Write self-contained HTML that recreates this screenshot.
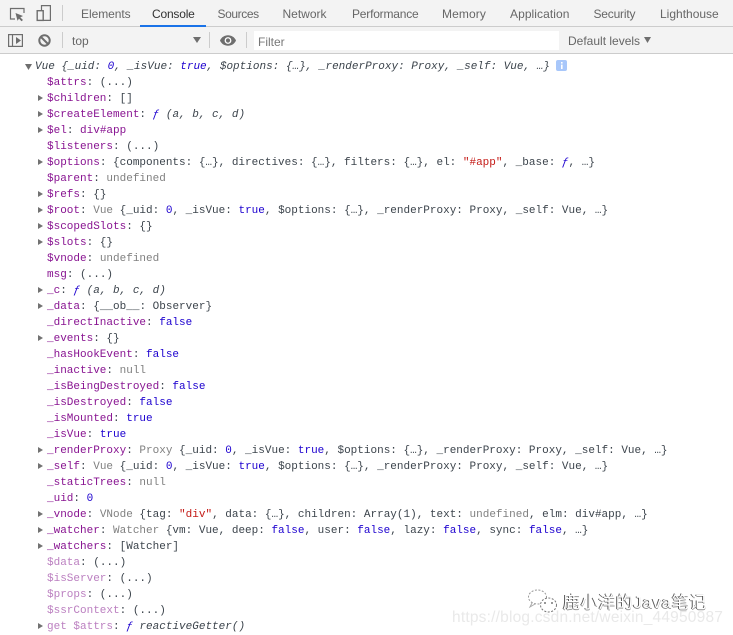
<!DOCTYPE html>
<html><head><meta charset="utf-8">
<style>
html,body{margin:0;padding:0;background:#fff}
body{width:733px;height:635px;overflow:hidden;position:relative;font-family:"Liberation Sans",sans-serif}
.bar1{position:absolute;left:0;top:0;width:733px;height:26px;background:#f3f3f3;border-bottom:1px solid #ccc}
.bar2{position:absolute;left:0;top:27px;width:733px;height:26px;background:#f3f3f3;border-bottom:1px solid #ccc}
.t{position:absolute;z-index:2;top:6px;font-size:12px;line-height:16px;color:#666;white-space:nowrap}
.sep{position:absolute;width:1px;height:16px;background:#ccc}
.ul{position:absolute;left:140px;top:25px;width:66px;height:2px;background:#1a73e8}
.r{position:absolute;left:47px;margin-top:1px;height:16px;line-height:16px;font-family:"Liberation Mono",monospace;font-size:11px;color:#3c444c;white-space:pre}
.k{color:#881391}.d{color:#bb7fc0}.n{color:#1c00cf}.s{color:#c41a16}.g{color:#808080}.i{font-style:italic}
.a{position:absolute;width:0;height:0;margin-top:1px;border-top:3.5px solid transparent;border-bottom:3.5px solid transparent;border-left:5px solid #727272}
svg{position:absolute;left:0;top:0}
.wm{position:absolute;z-index:3;left:452px;top:608px;margin-top:1px;font-size:15.5px;line-height:18px;color:#e9e9e9;white-space:nowrap;letter-spacing:.2px}
.wx{position:absolute;z-index:4;left:563px;top:592px;font-size:17px;letter-spacing:.6px;line-height:22px;color:#fff;white-space:nowrap;text-shadow:-1px 0 0 #555,0 1px 0 #999;font-family:"Liberation Sans","Noto Sans CJK SC",sans-serif}
</style></head><body>
<div class="bar1"></div><div class="bar2"></div>
<div class="sep" style="left:62px;top:5px"></div>
<div class="sep" style="left:62px;top:32px"></div>
<div class="sep" style="left:209px;top:32px"></div>
<div class="sep" style="left:246px;top:32px"></div>
<span class="t" style="left:81px;letter-spacing:-.05px">Elements</span>
<span class="t" style="left:152px;color:#333;letter-spacing:-.2px">Console</span>
<span class="t" style="left:217.5px;letter-spacing:-.4px">Sources</span>
<span class="t" style="left:282.5px">Network</span>
<span class="t" style="left:352px;letter-spacing:-.2px">Performance</span>
<span class="t" style="left:442px;letter-spacing:.1px">Memory</span>
<span class="t" style="left:510px;letter-spacing:.07px">Application</span>
<span class="t" style="left:593.5px;letter-spacing:-.2px">Security</span>
<span class="t" style="left:660px">Lighthouse</span>
<div class="ul"></div>
<span class="t" style="left:72px;top:33px">top</span>
<span class="t" style="left:258px;top:34px;color:#777">Filter</span>
<span class="t" style="left:568px;top:33px">Default levels</span>
<svg width="733" height="635" fill="none">
<rect x="254" y="31" width="305" height="19" fill="#fff"/>
<path d="M24 13V8.5H10.5V19H15" stroke="#6e6e6e" stroke-width="1.2"/>
<path d="M15.5 13L23 16L20.3 17.4L23 20L21.5 21.2L19 18.6L17.5 20.8Z" fill="#6e6e6e"/>
<path d="M41.5 10V5.6H50.4V20.4H43" stroke="#6e6e6e" stroke-width="1.2"/>
<rect x="37.2" y="10.7" width="6" height="9.7" stroke="#6e6e6e" stroke-width="1.4"/>
<rect x="8.6" y="34.6" width="13.8" height="11.8" stroke="#6e6e6e" stroke-width="1.2"/>
<path d="M12.5 35V46" stroke="#6e6e6e" stroke-width="1.2"/>
<path d="M16 37L21 40.5L16 44Z" fill="#6e6e6e"/>
<circle cx="44.5" cy="40.5" r="5.2" stroke="#6e6e6e" stroke-width="2"/>
<path d="M41 37L48 44" stroke="#6e6e6e" stroke-width="2"/>
<path d="M193 37H201L197 43Z" fill="#6e6e6e"/>
<path d="M220 40.5C223 33.5 233 33.5 236 40.5C233 47.5 223 47.5 220 40.5Z" fill="#6e6e6e"/>
<circle cx="228" cy="40.5" r="3.4" fill="#fff"/><circle cx="228" cy="40.5" r="2.1" fill="#6e6e6e"/>
<path d="M644 37H651L647.5 43Z" fill="#6e6e6e"/>
<rect x="556" y="60" width="11" height="11" rx="2" fill="#a8c7fa"/>
<rect x="561" y="62" width="1.6" height="1.6" fill="#fff"/><rect x="561" y="64.6" width="1.6" height="4.4" fill="#fff"/>
<path d="M25 64H32L28.5 70Z" fill="#6e6e6e"/>
<ellipse cx="537.5" cy="597" rx="9" ry="7" stroke="#999" stroke-width="1" stroke-dasharray="2 1.5"/>
<path d="M532 603L530 607L535 604" stroke="#aaa" stroke-width="1"/>
<ellipse cx="548.5" cy="605" rx="8" ry="7" fill="#fff" stroke="#777" stroke-width="1" stroke-dasharray="2 1.5"/>
<circle cx="545" cy="603" r="1" fill="#777"/><circle cx="552" cy="603" r="1" fill="#777"/>
</svg>
<div class="r i" style="left:35px;top:58px">Vue {_uid: <span class="n">0</span>, _isVue: <span class="n">true</span>, $options: {…}, _renderProxy: Proxy, _self: Vue, …}</div>
<div class="r" style="top:74px"><span class="k">$attrs</span>: (...)</div>
<div class="r" style="top:90px"><span class="k">$children</span>: []</div>
<div class="r" style="top:106px"><span class="k">$createElement</span>: <span class="n i">ƒ</span> <span class="i">(a, b, c, d)</span></div>
<div class="r" style="top:122px"><span class="k">$el</span>: <span style="color:#881391">div#app</span></div>
<div class="r" style="top:138px"><span class="k">$listeners</span>: (...)</div>
<div class="r" style="top:154px"><span class="k">$options</span>: {components: {…}, directives: {…}, filters: {…}, el: <span class="s">"#app"</span>, _base: <span class="n i">ƒ</span>, …}</div>
<div class="r" style="top:170px"><span class="k">$parent</span>: <span class="g">undefined</span></div>
<div class="r" style="top:186px"><span class="k">$refs</span>: {}</div>
<div class="r" style="top:202px"><span class="k">$root</span>: <span class="g">Vue</span> {_uid: <span class="n">0</span>, _isVue: <span class="n">true</span>, $options: {…}, _renderProxy: Proxy, _self: Vue, …}</div>
<div class="r" style="top:218px"><span class="k">$scopedSlots</span>: {}</div>
<div class="r" style="top:234px"><span class="k">$slots</span>: {}</div>
<div class="r" style="top:250px"><span class="k">$vnode</span>: <span class="g">undefined</span></div>
<div class="r" style="top:266px"><span class="k">msg</span>: (...)</div>
<div class="r" style="top:282px"><span class="k">_c</span>: <span class="n i">ƒ</span> <span class="i">(a, b, c, d)</span></div>
<div class="r" style="top:298px"><span class="k">_data</span>: {<span>__ob__</span>: Observer}</div>
<div class="r" style="top:314px"><span class="k">_directInactive</span>: <span class="n">false</span></div>
<div class="r" style="top:330px"><span class="k">_events</span>: {}</div>
<div class="r" style="top:346px"><span class="k">_hasHookEvent</span>: <span class="n">false</span></div>
<div class="r" style="top:362px"><span class="k">_inactive</span>: <span class="g">null</span></div>
<div class="r" style="top:378px"><span class="k">_isBeingDestroyed</span>: <span class="n">false</span></div>
<div class="r" style="top:394px"><span class="k">_isDestroyed</span>: <span class="n">false</span></div>
<div class="r" style="top:410px"><span class="k">_isMounted</span>: <span class="n">true</span></div>
<div class="r" style="top:426px"><span class="k">_isVue</span>: <span class="n">true</span></div>
<div class="r" style="top:442px"><span class="k">_renderProxy</span>: <span class="g">Proxy</span> {_uid: <span class="n">0</span>, _isVue: <span class="n">true</span>, $options: {…}, _renderProxy: Proxy, _self: Vue, …}</div>
<div class="r" style="top:458px"><span class="k">_self</span>: <span class="g">Vue</span> {_uid: <span class="n">0</span>, _isVue: <span class="n">true</span>, $options: {…}, _renderProxy: Proxy, _self: Vue, …}</div>
<div class="r" style="top:474px"><span class="k">_staticTrees</span>: <span class="g">null</span></div>
<div class="r" style="top:490px"><span class="k">_uid</span>: <span class="n">0</span></div>
<div class="r" style="top:506px"><span class="k">_vnode</span>: <span class="g">VNode</span> {tag: <span class="s">"div"</span>, data: {…}, children: Array(1), text: <span class="g">undefined</span>, elm: div#app, …}</div>
<div class="r" style="top:522px"><span class="k">_watcher</span>: <span class="g">Watcher</span> {vm: Vue, deep: <span class="n">false</span>, user: <span class="n">false</span>, lazy: <span class="n">false</span>, sync: <span class="n">false</span>, …}</div>
<div class="r" style="top:538px"><span class="k">_watchers</span>: [Watcher]</div>
<div class="r" style="top:554px"><span class="d">$data</span>: (...)</div>
<div class="r" style="top:570px"><span class="d">$isServer</span>: (...)</div>
<div class="r" style="top:586px"><span class="d">$props</span>: (...)</div>
<div class="r" style="top:602px"><span class="d">$ssrContext</span>: (...)</div>
<div class="r" style="top:618px"><span class="d">get $attrs</span>: <span class="n i">ƒ</span> <span class="i">reactiveGetter()</span></div>
<i class="a" style="left:38px;top:94px"></i>
<i class="a" style="left:38px;top:110px"></i>
<i class="a" style="left:38px;top:126px"></i>
<i class="a" style="left:38px;top:158px"></i>
<i class="a" style="left:38px;top:190px"></i>
<i class="a" style="left:38px;top:206px"></i>
<i class="a" style="left:38px;top:222px"></i>
<i class="a" style="left:38px;top:238px"></i>
<i class="a" style="left:38px;top:286px"></i>
<i class="a" style="left:38px;top:302px"></i>
<i class="a" style="left:38px;top:334px"></i>
<i class="a" style="left:38px;top:446px"></i>
<i class="a" style="left:38px;top:462px"></i>
<i class="a" style="left:38px;top:510px"></i>
<i class="a" style="left:38px;top:526px"></i>
<i class="a" style="left:38px;top:542px"></i>
<i class="a" style="left:38px;top:622px"></i>
<div class="wm">https://blog.csdn.net/weixin_44950987</div>
<div class="wx">鹿小洋的Java笔记</div>
</body></html>
